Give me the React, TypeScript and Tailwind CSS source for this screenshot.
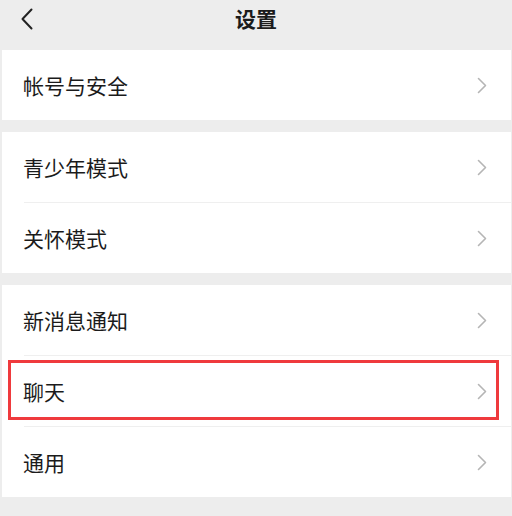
import React from 'react';

const font = { fontFamily: '"Noto Sans CJK SC", "Noto Sans", sans-serif' };

const Chevron = () => (
  <svg width="10" height="17" viewBox="0 0 10 17" fill="none">
    <path d="M1.5 1.5 L8.5 8.5 L1.5 15.5" stroke="#b5b5b5" strokeWidth="1.6" strokeLinecap="round" strokeLinejoin="round" />
  </svg>
);

const Row = ({ label, divider, highlight }: { label: string; divider?: boolean; highlight?: boolean }) => (
  <div className="relative">
    {divider && <div className="ml-[22px] h-px bg-[#efefef]" />}
    <div className="h-[70px] flex items-center justify-between pl-[21px] pr-[24px]">
      <span className="text-[21px] text-[#1b1b1b] leading-none">{label}</span>
      <Chevron />
    </div>
    {highlight && (
      <div className="absolute left-[6px] right-[12px] top-[5px] h-[60px] border-[3px] border-[#ef3a3d]" />
    )}
  </div>
);

export default function App() {
  return (
    <div className="w-[512px] h-[516px] bg-[#ededed] overflow-hidden" style={font}>
      <div className="relative h-[50px] flex items-center justify-center">
        <svg className="absolute left-[20px] top-[8px]" width="14" height="22" viewBox="0 0 14 22" fill="none">
          <path d="M11.5 1.5 L2.5 11 L11.5 20.5" stroke="#222" strokeWidth="2" strokeLinecap="round" strokeLinejoin="round" />
        </svg>
        <span className="text-[21px] font-semibold text-[#1b1b1b] -mt-[12px]">设置</span>
      </div>
      <div className="ml-[2px] mr-px bg-white">
        <Row label="帐号与安全" />
      </div>
      <div className="ml-[2px] mr-px bg-white mt-[12px]">
        <Row label="青少年模式" />
        <Row label="关怀模式" divider />
      </div>
      <div className="ml-[2px] mr-px bg-white mt-[12px]">
        <Row label="新消息通知" />
        <Row label="聊天" divider highlight />
        <Row label="通用" divider />
      </div>
    </div>
  );
}
